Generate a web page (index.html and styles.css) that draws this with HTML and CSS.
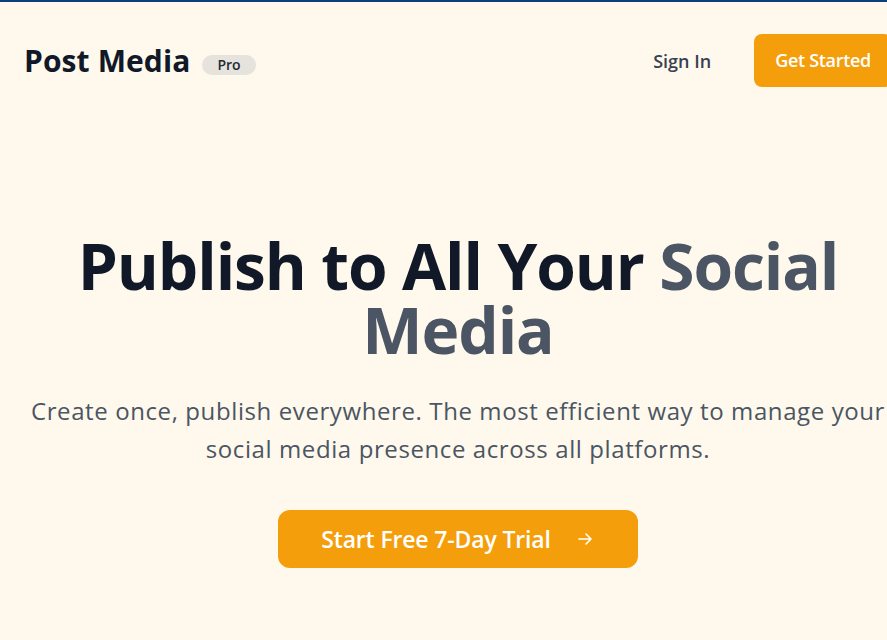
FILE: index.html
```html
<!DOCTYPE html>
<html lang="en">
<head>
<meta charset="utf-8">
<title>Post Media</title>
<link rel="stylesheet" href="styles.css">
</head>
<body>
<div class="page">
  <header class="header">
    <div class="brand">
      <span class="logo">Post Media</span>
      <span class="badge">Pro</span>
    </div>
    <nav class="nav">
      <a class="signin" href="#">Sign In</a>
      <a class="btn-start" href="#">Get Started</a>
    </nav>
  </header>
  <main class="hero">
    <h1 class="title">Publish to All Your <span class="muted">Social</span> <span class="muted">Media</span></h1>
    <p class="lead">Create once, publish everywhere. The most efficient way to manage your social media presence across all platforms.</p>
    <a class="cta" href="#">
      <span>Start Free 7-Day Trial</span>
      <svg class="arrow" width="16" height="16" viewBox="0 0 16 16" fill="none" stroke="currentColor" stroke-width="1.6" stroke-linecap="round" stroke-linejoin="round"><path d="M2 8h12M9 3l5 5-5 5"/></svg>
    </a>
  </main>
</div>
</body>
</html>
```
FILE: styles.css
```css
html {
  overflow-x: hidden;
  background: #fef9ec;
}
body {
  margin: 0;
  font-family: "Open Sans", "Noto Sans", sans-serif;
  background: #fef9ec;
  border-top: 2px solid #0c3f7c;
  min-height: 638px;
}
.page {
  width: 916px;
}
.header {
  display: flex;
  justify-content: space-between;
  align-items: center;
  padding: 32px 24px 0;
}
.brand {
  display: flex;
  align-items: center;
  gap: 12px;
}
.logo {
  font-size: 30px;
  font-weight: 700;
  color: #111827;
  letter-spacing: 0.1px;
  line-height: 36px;
}
.badge {
  margin-top: 9px;
  background: #e6e3dc;
  color: #1f2937;
  font-size: 14px;
  font-weight: 600;
  line-height: 20px;
  padding: 0 15px;
  border-radius: 999px;
}
.nav {
  display: flex;
  align-items: center;
  gap: 43px;
}
.signin {
  color: #374151;
  font-size: 18px;
  font-weight: 600;
  text-decoration: none;
  letter-spacing: 0;
}
.btn-start {
  background: #f59e0b;
  color: #fff;
  font-size: 18px;
  font-weight: 600;
  line-height: 25px;
  padding: 14px 21px;
  border-radius: 8px;
  text-decoration: none;
  letter-spacing: -0.3px;
}
.hero {
  display: flex;
  flex-direction: column;
  align-items: center;
  text-align: center;
  padding-top: 147px;
}
.title {
  margin: 0;
  font-size: 64px;
  line-height: 64px;
  font-weight: 700;
  color: #111827;
  letter-spacing: -1.1px;
  width: 800px;
}
.muted {
  color: #4b5563;
}
.lead {
  margin: 30px 0 0;
  font-size: 24px;
  line-height: 38px;
  color: #4b5563;
  width: 896px;
  letter-spacing: 0.6px;
}
.cta {
  margin-top: 42px;
  display: flex;
  align-items: center;
  gap: 26px;
  background: #f59e0b;
  color: #fff;
  font-size: 23px;
  font-weight: 600;
  line-height: 28px;
  padding: 15px 45px 15px 43px;
  border-radius: 12px;
  text-decoration: none;
  letter-spacing: -0.15px;
}
.arrow {
  display: block;
}
```
